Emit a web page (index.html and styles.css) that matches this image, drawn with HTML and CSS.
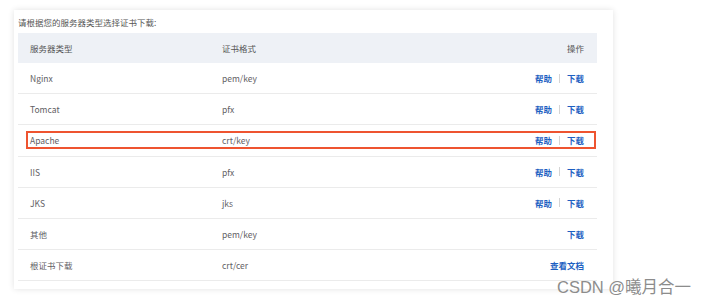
FILE: index.html
```html
<!DOCTYPE html>
<html lang="zh-CN">
<head>
<meta charset="utf-8">
<link rel="stylesheet" href="styles.css">
</head>
<body>
<div class="page">
  <div class="card">
    <div class="intro">请根据您的服务器类型选择证书下载:</div>
    <div class="table">
      <div class="row head">
        <div class="cell">服务器类型</div>
        <div class="cell">证书格式</div>
        <div class="cell act">操作</div>
      </div>
      <div class="row">
        <div class="cell">Nginx</div>
        <div class="cell">pem/key</div>
        <div class="cell act"><a class="link">帮助</a><span class="sep"></span><a class="link">下载</a></div>
      </div>
      <div class="row">
        <div class="cell">Tomcat</div>
        <div class="cell">pfx</div>
        <div class="cell act"><a class="link">帮助</a><span class="sep"></span><a class="link">下载</a></div>
      </div>
      <div class="row marked">
        <div class="cell">Apache</div>
        <div class="cell">crt/key</div>
        <div class="cell act"><a class="link">帮助</a><span class="sep"></span><a class="link">下载</a></div>
        <div class="mark"></div>
      </div>
      <div class="row">
        <div class="cell">IIS</div>
        <div class="cell">pfx</div>
        <div class="cell act"><a class="link">帮助</a><span class="sep"></span><a class="link">下载</a></div>
      </div>
      <div class="row">
        <div class="cell">JKS</div>
        <div class="cell">jks</div>
        <div class="cell act"><a class="link">帮助</a><span class="sep"></span><a class="link">下载</a></div>
      </div>
      <div class="row">
        <div class="cell">其他</div>
        <div class="cell">pem/key</div>
        <div class="cell act"><a class="link">下载</a></div>
      </div>
      <div class="row">
        <div class="cell">根证书下载</div>
        <div class="cell">crt/cer</div>
        <div class="cell act"><a class="link">查看文档</a></div>
      </div>
    </div>
  </div>
  <div class="watermark">CSDN @曦月合一</div>
</div>
</body>
</html>
```
FILE: styles.css
```css
html, body {
  margin: 0;
  padding: 0;
  background: #ffffff;
}
body {
  font-family: "Noto Sans CJK SC", "Noto Sans", sans-serif;
  color: #5f6064;
  font-size: 8.5px;
}
.page {
  position: relative;
  width: 708px;
  height: 305px;
  padding: 10px 0 0 14px;
  box-sizing: border-box;
}
.card {
  width: 599px;
  box-sizing: border-box;
  padding: 0 16px 8px 4px;
  background: #fff;
  box-shadow: 0 0 6px rgba(0, 0, 0, 0.12);
}
.intro {
  height: 23px;
  line-height: 24px;
  color: #555;
}
.table {
  display: flex;
  flex-direction: column;
}
.row {
  position: relative;
  display: grid;
  grid-template-columns: 192px 1fr 1fr;
  align-items: center;
  height: 31.2px;
  box-sizing: border-box;
  border-bottom: 1px solid #ebebeb;
}
.row.head {
  height: 30px;
  background: #eef1f6;
  border-bottom: none;
  color: #555;
}
.cell {
  padding-left: 12px;
  white-space: nowrap;
}
.cell.act {
  padding-left: 0;
  padding-right: 13px;
  display: flex;
  justify-content: flex-end;
  align-items: center;
}
.link {
  color: #1d5fc2;
  font-weight: 700;
}
.sep {
  display: inline-block;
  width: 1px;
  height: 9px;
  background: #d4d4d4;
  margin: 0 7px;
}
.mark {
  position: absolute;
  left: 8px;
  right: 1px;
  top: 6px;
  height: 18px;
  box-sizing: border-box;
  border: 2px solid #ee5430;
}
.watermark {
  position: absolute;
  left: 557px;
  top: 276px;
  font-family: "Liberation Sans", "Noto Sans CJK SC", sans-serif;
  font-size: 16.5px;
  line-height: 22px;
  color: #8c8c8c;
  white-space: nowrap;
}
```
